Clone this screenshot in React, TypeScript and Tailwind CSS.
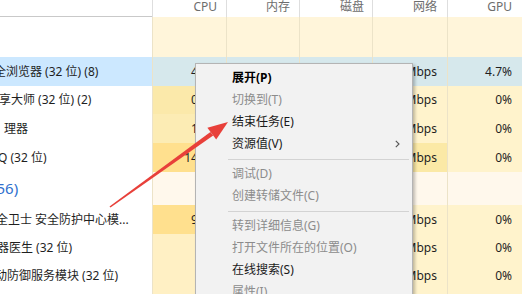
import React from 'react';

type Row = {
  name: string;
  off: string;
  cpu: string;
  mem: string;
  disk: string;
  net: string;
  gpu: string;
  left: string;
  cpuBg: string;
  memBg: string;
  netBg: string;
  gpuBg: string;
  h: string;
};

const rows: Row[] = [
  { name: '全浏览器 (32 位) (8)', off: '-ml-[6px]', cpu: '4.5%', mem: '182.4 MB', disk: '0.1 MB/秒', net: '0 Mbps', gpu: '4.7%', left: 'bg-[#cce8ff]', cpuBg: 'bg-[#d6e8ec]', memBg: 'bg-[#d6e8ec]', netBg: 'bg-[#d6e8ec]', gpuBg: 'bg-[#d6e8ec]', h: 'h-[29px]' },
  { name: '享大师 (32 位) (2)', off: '-ml-[1px]', cpu: '0.6%', mem: '24.1 MB', disk: '0 MB/秒', net: '0 Mbps', gpu: '0%', left: 'bg-white', cpuBg: 'bg-[#fbe9aa]', memBg: 'bg-[#fff1c6]', netBg: 'bg-[#fff3cc]', gpuBg: 'bg-[#fff3cc]', h: 'h-[28px]' },
  { name: '理器', off: 'ml-[4px]', cpu: '1.3%', mem: '21.6 MB', disk: '0 MB/秒', net: '0 Mbps', gpu: '0%', left: 'bg-white', cpuBg: 'bg-[#fcecb4]', memBg: 'bg-[#fff1c6]', netBg: 'bg-[#fff3cc]', gpuBg: 'bg-[#fff3cc]', h: 'h-[29px]' },
  { name: 'Q (32 位)', off: '-ml-[2px]', cpu: '14.2%', mem: '96.3 MB', disk: '0.1 MB/秒', net: '0.1 Mbps', gpu: '0%', left: 'bg-white', cpuBg: 'bg-[#ffe08e]', memBg: 'bg-[#fbe9a9]', netBg: 'bg-[#fbe9a6]', gpuBg: 'bg-[#fff3cc]', h: 'h-[29px]' },
];

const rows2: Row[] = [
  { name: '全卫士 安全防护中心模...', off: '-ml-[4px]', cpu: '9.1%', mem: '38.5 MB', disk: '0 MB/秒', net: '0 Mbps', gpu: '0%', left: 'bg-white', cpuBg: 'bg-[#ffe08e]', memBg: 'bg-[#fff1c6]', netBg: 'bg-[#fff3cc]', gpuBg: 'bg-[#fff3cc]', h: 'h-[29px]' },
  { name: '器医生 (32 位)', off: '-ml-[3px]', cpu: '0%', mem: '2.1 MB', disk: '0 MB/秒', net: '0 Mbps', gpu: '0%', left: 'bg-white', cpuBg: 'bg-[#fff0c4]', memBg: 'bg-[#fff1c6]', netBg: 'bg-[#fff3cc]', gpuBg: 'bg-[#fff3cc]', h: 'h-[28px]' },
  { name: '动防御服务模块 (32 位)', off: '-ml-[5px]', cpu: '0%', mem: '6.4 MB', disk: '0 MB/秒', net: '0 Mbps', gpu: '0%', left: 'bg-white', cpuBg: 'bg-[#fff0c4]', memBg: 'bg-[#fff1c6]', netBg: 'bg-[#fff3cc]', gpuBg: 'bg-[#fff3cc]', h: 'h-[28px]' },
  { name: '务主程序 (32 位)', off: '-ml-[4px]', cpu: '0%', mem: '3.2 MB', disk: '0 MB/秒', net: '0 Mbps', gpu: '0%', left: 'bg-white', cpuBg: 'bg-[#fff0c4]', memBg: 'bg-[#fff1c6]', netBg: 'bg-[#fff3cc]', gpuBg: 'bg-[#fff3cc]', h: 'h-[28px]' },
];

const grid = 'grid grid-cols-[152px_74px_73px_73px_75px_75px]';
const cell = 'flex items-center justify-end border-l border-[#ece3c8]';

function ProcRow({ r }: { r: Row }) {
  return (
    <div className={`${grid} ${r.h} text-[12px] text-[#1f1f1f]`}>
      <div className={`${r.left} flex items-center overflow-hidden whitespace-nowrap`}>
        <span className={r.off}>{r.name}</span>
      </div>
      <div className={`${cell} ${r.cpuBg} pr-[8px]`}>{r.cpu}</div>
      <div className={`${cell} ${r.memBg} pr-[9px]`}>{r.mem}</div>
      <div className={`${cell} ${r.memBg} pr-[8px]`}>{r.disk}</div>
      <div className={`${cell} ${r.netBg} pr-[10px]`}>{r.net}</div>
      <div className={`${cell} ${r.gpuBg} pr-[10px]`}>{r.gpu}</div>
    </div>
  );
}

type Item = { label: string; kind: 'bold' | 'normal' | 'off' | 'sep'; sub?: boolean };

const menu: Item[] = [
  { label: '展开(P)', kind: 'bold' },
  { label: '切换到(T)', kind: 'off' },
  { label: '结束任务(E)', kind: 'normal' },
  { label: '资源值(V)', kind: 'normal', sub: true },
  { label: '', kind: 'sep' },
  { label: '调试(D)', kind: 'off' },
  { label: '创建转储文件(C)', kind: 'off' },
  { label: '', kind: 'sep' },
  { label: '转到详细信息(G)', kind: 'off' },
  { label: '打开文件所在的位置(O)', kind: 'off' },
  { label: '在线搜索(S)', kind: 'normal' },
  { label: '属性(I)', kind: 'off' },
];

function ContextMenu() {
  return (
    <div className="absolute left-[195px] top-[63px] w-[218px] h-[250px] bg-[#f2f2f2] border border-[#b4b4b4] shadow-[2px_2px_3px_rgba(0,0,0,0.25)] pt-[3px] text-[12px]">
      {menu.map((m, i) =>
        m.kind === 'sep' ? (
          <div key={i} className="h-[8px] flex items-center">
            <div className="h-px flex-1 bg-[#d3d3d3] ml-[32px] mr-[3px]" />
          </div>
        ) : (
          <div
            key={i}
            className={`h-[22px] flex items-center pl-[36px] whitespace-nowrap ${
              m.kind === 'bold' ? 'font-bold text-black' : m.kind === 'off' ? 'text-[#8c8c8c]' : 'text-[#1a1a1a]'
            }`}
          >
            <span>{m.label}</span>
            {m.sub && (
              <svg className="ml-auto mr-[12px]" width="5" height="8" viewBox="0 0 5 8">
                <path d="M0.8 0.8 L4 4 L0.8 7.2" fill="none" stroke="#555" strokeWidth="1.1" />
              </svg>
            )}
          </div>
        )
      )}
    </div>
  );
}

function Arrow() {
  return (
    <svg className="absolute left-0 top-0 pointer-events-none" width="522" height="294" viewBox="0 0 522 294">
      <polygon points="110.5,207.6 109.5,206.4 210.4,131.9 213.2,135.5" fill="#e8403a" />
      <polygon points="228,122 207.4,127.8 216.2,139.6" fill="#e8403a" />
    </svg>
  );
}

export default function App() {
  return (
    <div
      className="relative w-[522px] h-[294px] overflow-hidden bg-white"
      style={{ fontFamily: '"Noto Sans", "Noto Sans CJK SC", sans-serif' }}
    >
      {/* header */}
      <div className={`${grid} h-[17px] text-[12px] text-[#6d6d6d] leading-none`}>
        <div className="border-b border-[#c9c9c9]" />
        <div className="flex justify-end pr-[9px] pt-[1px] border-l border-[#dedede]">CPU</div>
        <div className="flex justify-end pr-[9px] pt-[1px] border-l border-[#dedede]">内存</div>
        <div className="flex justify-end pr-[8px] pt-[1px] border-l border-[#dedede]">磁盘</div>
        <div className="flex justify-end pr-[10px] pt-[1px] border-l border-[#dedede]">网络</div>
        <div className="flex justify-end pr-[10px] pt-[1px] border-l border-[#dedede]">GPU</div>
      </div>

      {/* summary band */}
      <div className={`${grid} h-[40px]`}>
        <div className="bg-white" />
        <div className="bg-[#fff5da] border-l border-[#ece3c8]" />
        <div className="bg-[#fff5da] border-l border-[#ece3c8]" />
        <div className="bg-[#fff5da] border-l border-[#ece3c8]" />
        <div className="bg-[#fff5da] border-l border-[#ece3c8]" />
        <div className="bg-[#fff5da] border-l border-[#ece3c8]" />
      </div>

      {rows.map((r, i) => (
        <ProcRow key={i} r={r} />
      ))}

      {/* group heading */}
      <div className={`${grid} h-[33px]`}>
        <div className="flex items-center overflow-hidden whitespace-nowrap text-[15px] text-[#2f6fce]">
          <span className="-ml-[8px]">(56)</span>
        </div>
        <div className="bg-[#fff8ec] border-l border-[#ece3c8]" />
        <div className="bg-[#fff8ec] border-l border-[#ece3c8]" />
        <div className="bg-[#fff8ec] border-l border-[#ece3c8]" />
        <div className="bg-[#fff8ec] border-l border-[#ece3c8]" />
        <div className="bg-[#fff8ec] border-l border-[#ece3c8]" />
      </div>

      {rows2.map((r, i) => (
        <ProcRow key={i} r={r} />
      ))}

      <ContextMenu />
      <Arrow />
    </div>
  );
}
